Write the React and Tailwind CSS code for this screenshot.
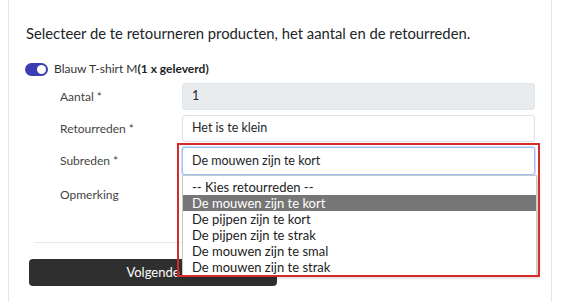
import React from "react";

const options = [
  "-- Kies retourreden --",
  "De mouwen zijn te kort",
  "De pijpen zijn te kort",
  "De pijpen zijn te strak",
  "De mouwen zijn te smal",
  "De mouwen zijn te strak",
];

const App = () => {
  return (
    <div className="h-[302px] overflow-hidden bg-white pl-2 pr-[9px] font-[Lato,sans-serif] text-[#212529]">
      <div className="h-full border-x border-[#e8e8e8] px-4 pt-[23px]">
        <h2 className="ml-px text-[14.8px] leading-5">
          Selecteer de te retourneren producten, het aantal en de retourreden.
        </h2>

        {/* product switch */}
        <div className="mt-[19px] flex h-[14px] items-center gap-[6px]">
          <span className="flex h-[13px] w-[23px] items-center justify-end rounded-full bg-[#3b3db3] pr-[2px]">
            <span className="h-[9px] w-[9px] rounded-full bg-white"></span>
          </span>
          <span className="text-[12px] text-[#333]">
            Blauw T-shirt M<b className="font-bold text-[#212529]">(1 x geleverd)</b>
          </span>
        </div>

        {/* form */}
        <div className="ml-[35px] mt-[7px] flex flex-col gap-[5px] text-[12.5px]">
          <div className="flex items-center">
            <label className="w-[122px] text-[12px] text-[#444]">Aantal *</label>
            <div className="flex h-[27px] w-[353px] items-center rounded-[3px] border border-[#e1e4e8] bg-[#e9ecef] px-[9px]">
              1
            </div>
          </div>
          <div className="flex items-center">
            <label className="w-[122px] text-[12px] text-[#444]">Retourreden *</label>
            <div className="flex h-[27px] w-[353px] items-center rounded-[3px] border border-[#dcdfe3] bg-white px-[9px]">
              Het is te klein
            </div>
          </div>
          <div className="flex items-center">
            <label className="w-[122px] text-[12px] text-[#444]">Subreden *</label>
            <div className="relative">
              <div className="flex h-[28px] w-[353px] items-center rounded-[3px] border border-[#9ec2f5] bg-white px-[9px] shadow-[0_0_0_1px_rgba(120,160,240,0.35)]">
                De mouwen zijn te kort
              </div>

              {/* opened select list */}
              <div className="absolute left-0 top-full z-10 w-[355px] border border-[#c9c9c9] bg-white pt-[3px] text-[13px] leading-4 shadow-[2px_2px_3px_rgba(0,0,0,0.18)]">
                {options.map((o, i) => (
                  <div
                    key={o}
                    className={
                      i === 1
                        ? "h-[16px] bg-[#767676] pl-[9px] text-white"
                        : "h-[16px] pl-[9px] text-[#222]"
                    }
                  >
                    {o}
                  </div>
                ))}
              </div>

              {/* red highlight */}
              <div className="pointer-events-none absolute left-[-5px] top-[-4px] z-20 h-[134px] w-[363px] border-2 border-[#d92a2a]"></div>
            </div>
          </div>
          <div className="flex items-start">
            <label className="w-[122px] pt-[6px] text-[12px] text-[#444]">Opmerking</label>
            <div className="h-[50px] w-[353px] rounded-[3px] border border-[#dcdfe3] bg-white"></div>
          </div>
        </div>

        <div className="ml-[9px] mt-[12px] h-px w-[501px] bg-[#e9e9e9]"></div>

        <button className="ml-[4px] mt-[16px] flex h-[27px] w-[248px] items-center justify-center rounded-[4px] bg-[#2f2f2f] text-[13px] text-white">
          Volgende
        </button>
      </div>
    </div>
  );
};

export default App;
